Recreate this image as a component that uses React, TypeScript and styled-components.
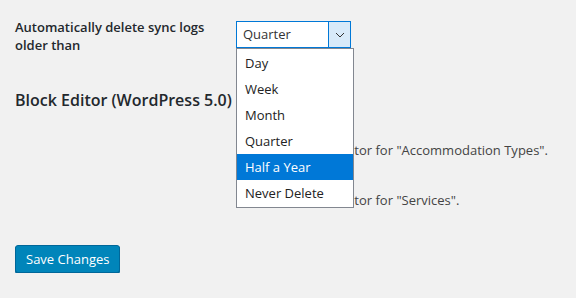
import styled, { createGlobalStyle } from "styled-components";

const GlobalStyle = createGlobalStyle`
  html, body {
    margin: 0;
    padding: 0;
    background: #f1f1f1;
  }
  body {
    font-family: "Open Sans", "Noto Sans", sans-serif;
    font-size: 13px;
    color: #23282d;
  }
`;

const options = ["Day", "Week", "Month", "Quarter", "Half a Year", "Never Delete"];

const App = () => {
  return (
    <>
      <GlobalStyle />
      <Page>
        <FormRow>
          <Label>Automatically delete sync logs older than</Label>
          <Field>
            <SelectWrap>
              <SelectBox>
                <SelectValue>Quarter</SelectValue>
                <ArrowBox>
                  <svg width="10" height="6" viewBox="0 0 10 6">
                    <path d="M1 1 L5 5 L9 1" fill="none" stroke="#333" strokeWidth="1" />
                  </svg>
                </ArrowBox>
              </SelectBox>
              <DropList>
                {options.map((o) => (
                  <Option key={o} active={o === "Half a Year"}>
                    {o}
                  </Option>
                ))}
              </DropList>
            </SelectWrap>
          </Field>
        </FormRow>

        <SectionTitle>Block Editor (WordPress 5.0)</SectionTitle>

        <FormRow>
          <Label />
          <CheckList>
            <CheckRow>
              <CheckBox />
              Enable block editor for "Accommodation Types".
            </CheckRow>
            <CheckRow>
              <CheckBox />
              Enable block editor for "Services".
            </CheckRow>
          </CheckList>
        </FormRow>

        <Submit>
          <Button>Save Changes</Button>
        </Submit>
      </Page>
    </>
  );
};

export default App;

const Page = styled.div`
  padding: 18px 15px 0 15px;
`;

const FormRow = styled.div`
  display: grid;
  grid-template-columns: 221px 1fr;
  align-items: start;
`;

const Label = styled.div`
  font-size: 13px;
  font-weight: 600;
  line-height: 18px;
  width: 200px;
  color: #23282d;
`;

const Field = styled.div`
  padding-top: 3px;
`;

const SelectWrap = styled.div`
  position: relative;
  width: 115px;
`;

const SelectBox = styled.div`
  display: flex;
  height: 27px;
  box-sizing: border-box;
  border: 1px solid #0078d7;
  background: #fff;
`;

const SelectValue = styled.div`
  flex: 1;
  padding-left: 6px;
  font-size: 13px;
  line-height: 25px;
  color: #333;
`;

const ArrowBox = styled.div`
  width: 21px;
  display: flex;
  align-items: center;
  justify-content: center;
  background: #d8eaf9;
  border-left: 1px solid #0078d7;
`;

const DropList = styled.div`
  position: absolute;
  top: 27px;
  left: 0;
  width: 118px;
  box-sizing: border-box;
  padding: 1px 0;
  background: #fff;
  border: 1px solid #828790;
  z-index: 2;
`;

const Option = styled.div<{ active?: boolean }>`
  height: 26px;
  line-height: 26px;
  padding-left: 8px;
  font-size: 13px;
  color: ${(p) => (p.active ? "#fff" : "#222")};
  background: ${(p) => (p.active ? "#0078d7" : "transparent")};
`;

const SectionTitle = styled.h2`
  font-size: 16px;
  font-weight: 600;
  line-height: 22px;
  margin: 35px 0 0 0;
  color: #23282d;
`;

const CheckList = styled.div`
  display: flex;
  flex-direction: column;
  gap: 34px;
  padding-top: 31px;
`;

const CheckRow = styled.label`
  display: flex;
  align-items: center;
  gap: 4px;
  height: 16px;
  font-size: 13px;
  color: #444;
  white-space: nowrap;
`;

const CheckBox = styled.span`
  display: inline-block;
  width: 16px;
  height: 16px;
  box-sizing: border-box;
  border: 1px solid #b4b9be;
  background: #fff;
  box-shadow: inset 0 1px 2px rgba(0, 0, 0, 0.1);
  flex-shrink: 0;
`;

const Submit = styled.div`
  padding-top: 37px;
`;

const Button = styled.button`
  height: 28px;
  padding: 0 10px;
  font-family: "Open Sans", "Noto Sans", sans-serif;
  font-size: 13px;
  line-height: 26px;
  color: #fff;
  background: #0085ba;
  border: 1px solid #006799;
  border-radius: 3px;
  box-shadow: 0 1px 0 #006799;
  cursor: pointer;
`;
